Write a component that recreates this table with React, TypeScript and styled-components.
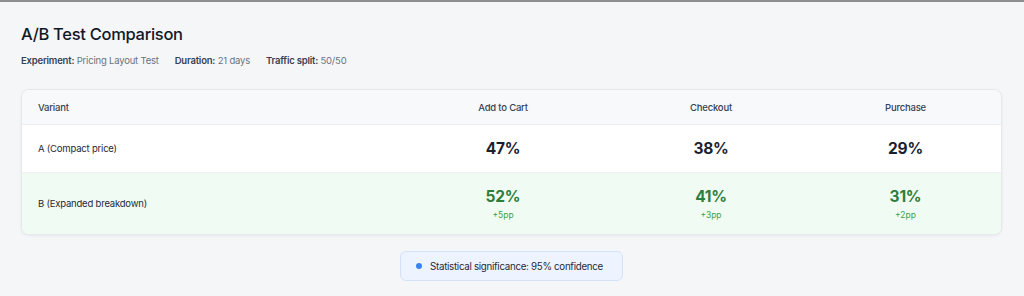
import React from 'react'
import styled, { createGlobalStyle } from 'styled-components'

interface IMetric {
    value: string
    delta?: string
}

interface IVariant {
    name: string
    metrics: IMetric[]
    winner?: boolean
}

const COLUMNS = ['Add to Cart', 'Checkout', 'Purchase']

const VARIANTS: IVariant[] = [
    {
        name: 'A (Compact price)',
        metrics: [{ value: '47%' }, { value: '38%' }, { value: '29%' }],
    },
    {
        name: 'B (Expanded breakdown)',
        winner: true,
        metrics: [
            { value: '52%', delta: '+5pp' },
            { value: '41%', delta: '+3pp' },
            { value: '31%', delta: '+2pp' },
        ],
    },
]

const GlobalStyle = createGlobalStyle`
    html, body {
        margin: 0;
        padding: 0;
        background: #f5f6f8;
        font-family: Inter, "Noto Sans", "Liberation Sans", sans-serif;
        color: #111827;
    }
    body {
        border-top: 2px solid #8e8e8e;
    }
`

export default function App() {
    return <Page>
        <GlobalStyle />
        <Title>A/B Test Comparison</Title>
        <Meta>
            <MetaItem><b>Experiment:</b> Pricing Layout Test</MetaItem>
            <MetaItem><b>Duration:</b> 21 days</MetaItem>
            <MetaItem><b>Traffic split:</b> 50/50</MetaItem>
        </Meta>

        <Card>
            <HeaderRow>
                <HeaderCell>Variant</HeaderCell>
                {COLUMNS.map(col => <HeaderCell key={col} $center>{col}</HeaderCell>)}
            </HeaderRow>

            {VARIANTS.map((variant, index) => (
                <Row key={variant.name} $winner={variant.winner} $last={index === VARIANTS.length - 1}>
                    <NameCell>{variant.name}</NameCell>
                    {variant.metrics.map((metric, i) => (
                        <MetricCell key={i}>
                            <Value $winner={variant.winner}>{metric.value}</Value>
                            {metric.delta && <Delta>{metric.delta}</Delta>}
                        </MetricCell>
                    ))}
                </Row>
            ))}
        </Card>

        <Footer>
            <Badge>
                <Dot />
                Statistical significance: 95% confidence
            </Badge>
        </Footer>
    </Page>
}

const Page = styled.div`
    padding: 20px 22px 16px 21px;
`

const Title = styled.h1`
    margin: 0;
    font-size: 16.5px;
    line-height: 24px;
    font-weight: 500;
    letter-spacing: -0.3px;
    color: #111827;
`

const Meta = styled.div`
    display: flex;
    gap: 16px;
    margin-top: 8px;
    font-size: 9.5px;
    line-height: 14px;
    letter-spacing: -0.2px;
    color: #6b7280;
`

const MetaItem = styled.span`
    b {
        font-weight: 600;
        color: #374151;
    }
`

const Card = styled.div`
    margin-top: 21px;
    background: #ffffff;
    border: 1px solid #e6e8ec;
    border-radius: 8px;
    overflow: hidden;
    box-shadow: 0 1px 3px rgba(15, 23, 42, 0.06);
`

const Grid = styled.div`
    display: grid;
    grid-template-columns: 372px 218px 198px 1fr;
    align-items: center;
`

const HeaderRow = styled(Grid)`
    height: 34px;
    background: #f8f9fb;
    border-bottom: 1px solid #eceef2;
`

const HeaderCell = styled.div<{ $center?: boolean }>`
    padding: 0 16px;
    font-size: 9.5px;
    font-weight: 500;
    letter-spacing: -0.2px;
    color: #374151;
    text-align: ${p => (p.$center ? 'center' : 'left')};
`

const Row = styled(Grid)<{ $winner?: boolean; $last?: boolean }>`
    min-height: ${p => (p.$winner ? '61px' : '47px')};
    background: ${p => (p.$winner ? '#f0fcf3' : '#ffffff')};
    border-bottom: ${p => (p.$last ? 'none' : '1px solid #eef0f3')};
`

const NameCell = styled.div`
    padding: 0 16px;
    font-size: 9.5px;
    letter-spacing: -0.2px;
    color: #1f2937;
`

const MetricCell = styled.div`
    display: flex;
    flex-direction: column;
    align-items: center;
`

const Value = styled.div<{ $winner?: boolean }>`
    font-size: 15.5px;
    line-height: 20px;
    font-weight: 700;
    letter-spacing: -0.2px;
    color: ${p => (p.$winner ? '#2e7d3a' : '#1a1f2e')};
`

const Delta = styled.div`
    margin-top: 2px;
    font-size: 8.5px;
    line-height: 12px;
    color: #43a047;
`

const Footer = styled.div`
    display: flex;
    justify-content: center;
    margin-top: 16px;
`

const Badge = styled.div`
    display: flex;
    align-items: center;
    gap: 8px;
    height: 28px;
    padding: 0 19px 0 15px;
    background: #eef4ff;
    border: 1px solid #d3e2fb;
    border-radius: 6px;
    font-size: 9.75px;
    letter-spacing: -0.3px;
    color: #1f2937;
`

const Dot = styled.span`
    width: 6px;
    height: 6px;
    border-radius: 50%;
    background: #3b82f6;
`
